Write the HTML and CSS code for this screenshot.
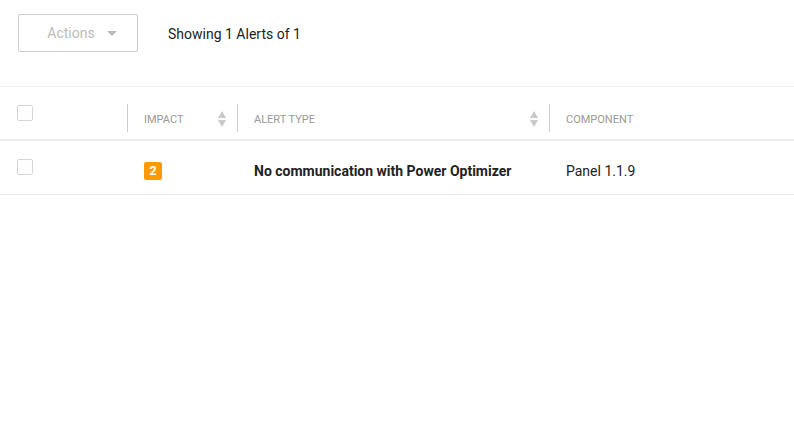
FILE: index.html
```html
<!DOCTYPE html>
<html lang="en">

<head>
    <meta charset="UTF-8">
    <title>Alerts</title>
    <link rel="stylesheet" href="styles.css">
</head>

<body>

    <div class="toolbar">
        <button class="actions" disabled>Actions <span class="caret"></span></button>
        <div class="count">Showing 1 Alerts of 1</div>
    </div>

    <table class="alerts">
        <thead>
            <tr>
                <th class="col-check"><span class="checkbox"></span></th>
                <th class="col-impact">
                    <div class="th-inner">IMPACT <span class="sort"></span></div>
                </th>
                <th class="col-type">
                    <div class="th-inner">ALERT TYPE <span class="sort"></span></div>
                </th>
                <th class="col-component">
                    <div class="th-inner">COMPONENT</div>
                </th>
            </tr>
        </thead>
        <tbody>
            <tr>
                <td class="col-check"><span class="checkbox"></span></td>
                <td class="col-impact"><span class="badge">2</span></td>
                <td class="col-type"><strong>No communication with Power Optimizer</strong></td>
                <td class="col-component">Panel 1.1.9</td>
            </tr>
        </tbody>
    </table>

</body>

</html>
```

FILE: styles.css
```css
body {
    font-family: Roboto, "Liberation Sans", sans-serif;
    background: #ffffff;
    color: #222222;
    margin: 0;
}

.toolbar {
    display: flex;
    align-items: center;
    height: 87px;
    padding: 0 18px 20px 18px;
    box-sizing: border-box;
    border-bottom: 1px solid #f2f2f2;
}

.actions {
    width: 120px;
    height: 38px;
    background: #ffffff;
    border: 1px solid #cccccc;
    border-radius: 2px;
    color: #bbbbbb;
    font-family: inherit;
    font-size: 14px;
    display: flex;
    align-items: center;
    justify-content: center;
    gap: 12px;
    padding: 0 0 0 8px;
}

.caret {
    width: 0;
    height: 0;
    border-left: 5px solid transparent;
    border-right: 5px solid transparent;
    border-top: 5px solid #bbbbbb;
}

.count {
    font-size: 14px;
    margin-left: 30px;
    margin-top: 2px;
    color: #222222;
}

.alerts {
    width: 100%;
    border-collapse: collapse;
}

.alerts th,
.alerts td {
    box-sizing: border-box;
    vertical-align: middle;
    text-align: left;
}

.alerts th {
    height: 53px;
    padding: 0;
    font-weight: normal;
    font-size: 11px;
    color: #999999;
    border-bottom: 2px solid #ececec;
}

.alerts td {
    height: 54px;
    padding: 8px 0 0 17px;
    font-size: 14px;
    border-bottom: 1px solid #e6e6e6;
}

.alerts td.col-check {
    padding-top: 0;
}

.alerts th.col-check {
    padding-left: 17px;
}

.th-inner {
    display: flex;
    align-items: center;
    justify-content: space-between;
    height: 28px;
    padding: 2px 10px 0 16px;
    border-left: 1px solid #cccccc;
    box-sizing: border-box;
    margin-top: 10px;
}

.col-check {
    width: 127px;
}

.col-impact {
    width: 110px;
}

.col-type {
    width: 312px;
}

.checkbox {
    display: block;
    width: 14px;
    height: 14px;
    border: 1px solid #d6d6d6;
    border-radius: 2px;
}

.sort {
    position: relative;
    width: 9px;
    height: 16px;
}

.sort::before,
.sort::after {
    content: "";
    position: absolute;
    left: 0;
    border-left: 4.5px solid transparent;
    border-right: 4.5px solid transparent;
}

.sort::before {
    top: 0;
    border-bottom: 7px solid #c8c8c8;
}

.sort::after {
    bottom: 0;
    border-top: 7px solid #c8c8c8;
}

.badge {
    display: block;
    width: 18px;
    height: 18px;
    line-height: 18px;
    text-align: center;
    background: #ff9a00;
    color: #ffffff;
    font-size: 13px;
    font-weight: bold;
    border-radius: 2px;
}

.alerts strong {
    font-weight: bold;
    color: #222222;
}
```
